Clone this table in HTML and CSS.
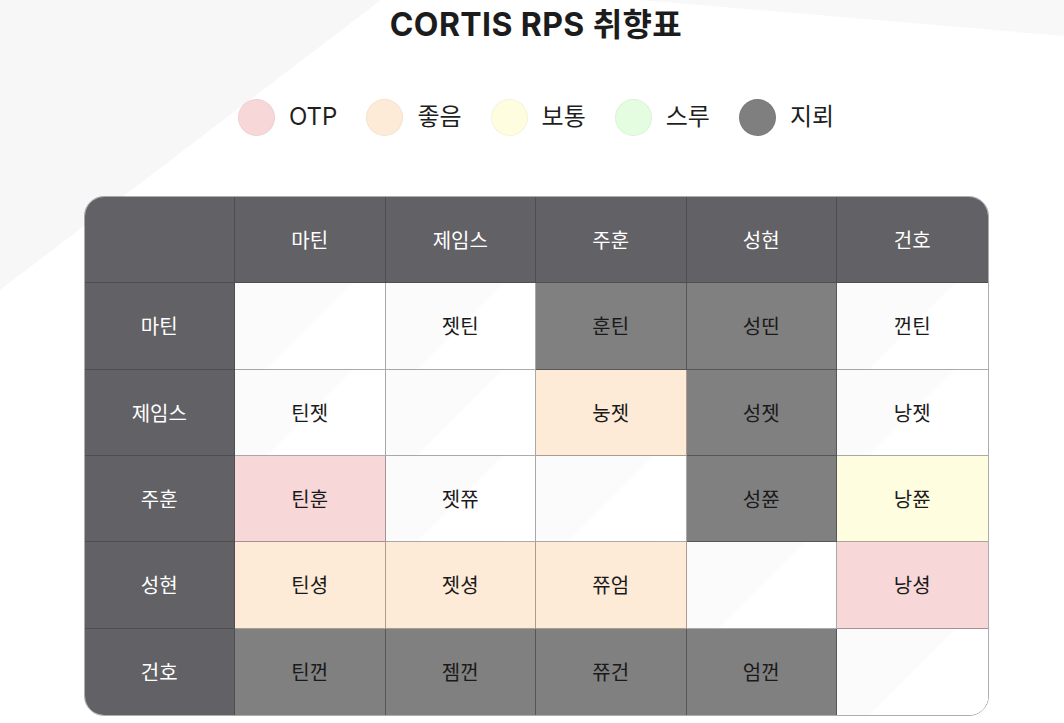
FILE: index.html
```html
<!DOCTYPE html>
<html lang="ko">
<head>
<meta charset="utf-8">
<title>CORTIS RPS 취향표</title>
<link rel="stylesheet" href="styles.css">
</head>
<body>
<div class="bg-shape bg-left"></div>
<div class="bg-shape bg-top"></div>
<main class="page">
  <h1 class="title">CORTIS RPS 취향표</h1>
  <ul class="legend">
    <li class="legend-item"><span class="dot otp"></span><span class="legend-label">OTP</span></li>
    <li class="legend-item"><span class="dot good"></span><span class="legend-label">좋음</span></li>
    <li class="legend-item"><span class="dot normal"></span><span class="legend-label">보통</span></li>
    <li class="legend-item"><span class="dot pass"></span><span class="legend-label">스루</span></li>
    <li class="legend-item"><span class="dot mine"></span><span class="legend-label">지뢰</span></li>
  </ul>
  <div class="grid">
    <div class="cell head"></div>
    <div class="cell head">마틴</div>
    <div class="cell head">제임스</div>
    <div class="cell head">주훈</div>
    <div class="cell head">성현</div>
    <div class="cell head">건호</div>

    <div class="cell head">마틴</div>
    <div class="cell c-none"></div>
    <div class="cell c-none">젯틴</div>
    <div class="cell c-mine">훈틴</div>
    <div class="cell c-mine">성띤</div>
    <div class="cell c-none">껀틴</div>

    <div class="cell head">제임스</div>
    <div class="cell c-none">틴젯</div>
    <div class="cell c-none"></div>
    <div class="cell c-good">눙젯</div>
    <div class="cell c-mine">성젯</div>
    <div class="cell c-none">낭젯</div>

    <div class="cell head">주훈</div>
    <div class="cell c-otp">틴훈</div>
    <div class="cell c-none">젯쮸</div>
    <div class="cell c-none"></div>
    <div class="cell c-mine">성쮼</div>
    <div class="cell c-normal">낭쮼</div>

    <div class="cell head">성현</div>
    <div class="cell c-good">틴셩</div>
    <div class="cell c-good">젯셩</div>
    <div class="cell c-good">쮸엄</div>
    <div class="cell c-none"></div>
    <div class="cell c-otp">낭셩</div>

    <div class="cell head">건호</div>
    <div class="cell c-mine">틴껀</div>
    <div class="cell c-mine">젬껀</div>
    <div class="cell c-mine">쮸건</div>
    <div class="cell c-mine">엄껀</div>
    <div class="cell c-none"></div>
  </div>
</main>
</body>
</html>
```

FILE: styles.css
```css
* { box-sizing: border-box; }

html, body {
  margin: 0;
  padding: 0;
  background: #ffffff;
}

body {
  font-family: Inter, "Noto Sans CJK KR", "Noto Sans", sans-serif;
  color: #1c1c1c;
  min-height: 723px;
  position: relative;
  overflow: hidden;
}

.bg-shape {
  position: absolute;
  top: 0;
  left: 0;
  width: 1064px;
  height: 723px;
  background: #f7f7f7;
  z-index: 0;
}

.bg-left {
  clip-path: polygon(0 0, 381px 0, 0 290px);
}

.bg-top {
  clip-path: polygon(640px 0, 1064px 0, 1064px 36px);
  background: #f8f8f8;
}

.page {
  position: relative;
  z-index: 1;
  padding: 6px 0 0 8px;
  display: flex;
  flex-direction: column;
  align-items: center;
}

.title {
  margin: 0;
  font-size: 32px;
  line-height: 38px;
  font-weight: 700;
  color: #1c1c1c;
  letter-spacing: 0.4px;
}

.legend {
  list-style: none;
  margin: 54px 0 0 0;
  padding: 0;
  display: flex;
  align-items: center;
  gap: 29px;
  height: 38px;
}

.legend-item {
  display: flex;
  align-items: center;
  gap: 14px;
}

.dot {
  width: 37px;
  height: 37px;
  border-radius: 50%;
  border: 1px solid rgba(0, 0, 0, 0.04);
  display: block;
}

.legend-label {
  font-size: 24px;
  line-height: 30px;
  color: #1f1f1f;
  font-family: Inter, "Noto Sans CJK KR", sans-serif;
}

.dot.otp { background: #f8d7d9; }
.dot.good { background: #fdebd7; }
.dot.normal { background: #fefde0; }
.dot.pass { background: #e4fcdf; }
.dot.mine { background: #7f7f7f; }

.grid {
  margin-top: 60px;
  width: 905px;
  display: grid;
  grid-template-columns: repeat(6, 1fr);
  grid-template-rows: repeat(6, 86.33px);
  border: 1px solid rgba(0, 0, 0, 0.32);
  border-radius: 20px;
  overflow: hidden;
}

.cell {
  display: flex;
  align-items: center;
  justify-content: center;
  font-family: "Noto Sans CJK KR", sans-serif;
  font-size: 20px;
  color: #1a1a1a;
  border-right: 1px solid rgba(0, 0, 0, 0.33);
  border-bottom: 1px solid rgba(0, 0, 0, 0.33);
}

.cell:nth-child(6n) { border-right: none; }
.cell:nth-last-child(-n+6) { border-bottom: none; }

.head {
  background-color: #626165;
  color: #ffffff;
  border-right-color: rgba(0, 0, 0, 0.2);
  border-bottom-color: rgba(0, 0, 0, 0.2);
}

.c-none {
  background-color: #fefefe;
  background-image: linear-gradient(135deg, #fbfbfb 0%, #fbfbfb 49%, #ffffff 51%, #ffffff 100%);
}
.c-otp { background-color: #f8d7d9; }
.c-good { background-color: #fdebd7; }
.c-normal { background-color: #fefde0; }
.c-mine { background-color: #808080; }
```
